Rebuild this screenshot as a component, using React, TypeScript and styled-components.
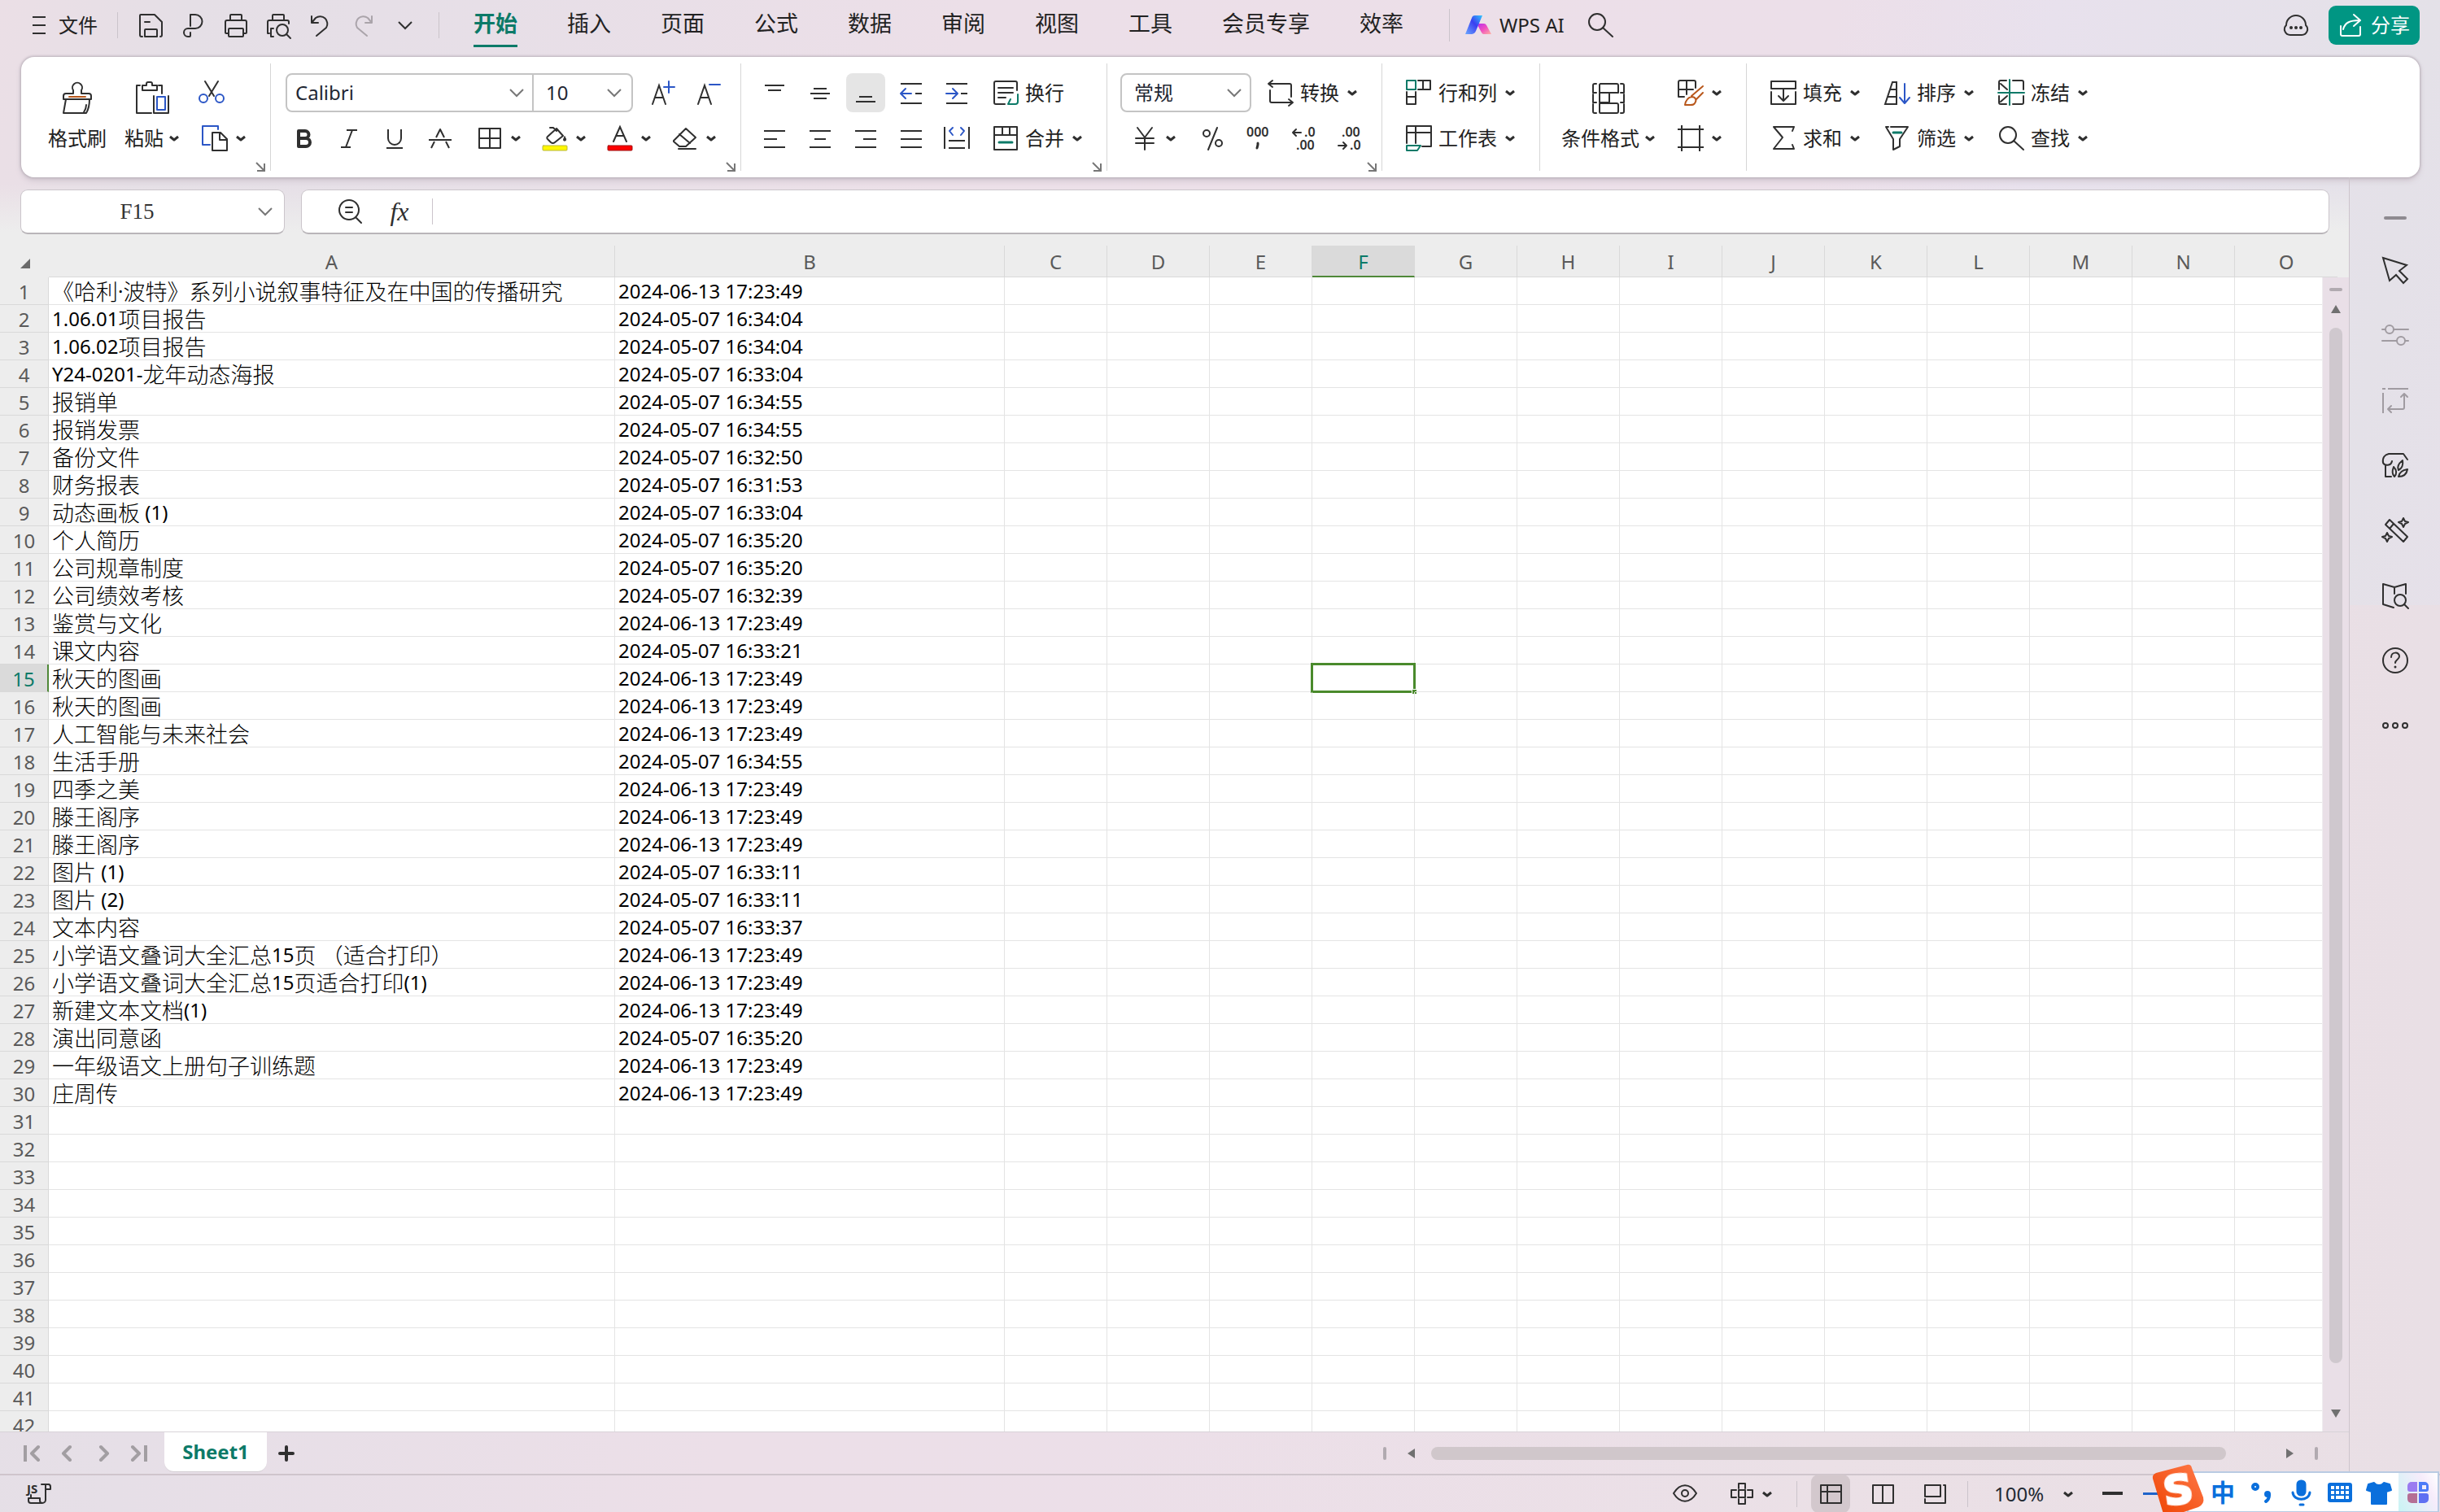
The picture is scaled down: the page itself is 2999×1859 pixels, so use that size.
import React from 'react';
import styled, { createGlobalStyle, css } from 'styled-components';

const INK = '#2f2f2f';
const GREEN = '#0c7a68';
const BLUE = '#2b56c6';
const IME = '#0a6fdc';
const UI = `"Noto Sans", "Noto Sans CJK SC", sans-serif`;

const GlobalStyle = createGlobalStyle`
  *, *::before, *::after { box-sizing: border-box; }
  html, body { margin: 0; padding: 0; }
  body { font-family: ${UI}; font-size: 24px; line-height: 32px; color: #222; overflow: hidden; }
  button, input, select { font: inherit; color: inherit; margin: 0; }
  button { border: 0; padding: 0; background: none; white-space: nowrap; cursor: pointer; }
  svg { display: block; flex: none; overflow: visible; }
`;

/* ---------- drawings ---------- */

type DrawProps = { size?: number; box?: number; color?: string; sw?: number; children: React.ReactNode };
const Draw = ({ size = 32, box = 32, color = INK, sw = 2, children }: DrawProps) => (
  <svg width={size} height={size} viewBox={`0 0 ${box} ${box}`} fill="none" stroke={color} strokeWidth={sw} strokeLinecap="round" strokeLinejoin="round" aria-hidden="true">
    {children}
  </svg>
);

const Caret = () => (
  <svg width="12" height="12" viewBox="0 0 12 12" fill="none" stroke={INK} strokeWidth="3" strokeLinejoin="round" aria-hidden="true">
    <path d="M1 4l5 4 5-4" />
  </svg>
);
const Chevron = ({ color = '#777' }: { color?: string }) => (
  <svg width="18" height="18" viewBox="0 0 18 18" fill="none" stroke={color} strokeWidth="2" aria-hidden="true">
    <path d="M1 5l8 8 8-8" />
  </svg>
);
const DigitText = ({ x, y, children }: { x: number; y: number; children: string }) => (
  <text x={x} y={y} fontFamily="Noto Sans" fontSize="16" fontWeight="600" fill={INK} stroke="none">{children}</text>
);

const icons = {
  menu: <Draw><path strokeLinecap="butt" d="M8 6h16M8 16h16M8 26h16" /></Draw>,
  save: <Draw><path d="M5 30H4a2 2 0 0 1-2-2V4a1 1 0 0 1 1-1h17l9 9v16a2 2 0 0 1-2 2M8 12h6M8 30v-8a1 1 0 0 1 1-1h13a1 1 0 0 1 1 1v8z" /></Draw>,
  exportPdf: <Draw><path d="M12 17V3h6a8 8 0 0 1 0 17H9a5 5 0 0 0 0 10h2a1 1 0 0 0 1-1v-4" /></Draw>,
  print: <Draw><path d="M9 9V4a1 1 0 0 1 1-1h12a1 1 0 0 1 1 1v5M6 26H4a1 1 0 0 1-1-1V12a2 2 0 0 1 2-2h22a2 2 0 0 1 2 2v13a1 1 0 0 1-1 1h-2" /><rect x="7" y="20" width="18" height="10" rx="1" /></Draw>,
  preview: <Draw><path d="M9 9V4a1 1 0 0 1 1-1h12a1 1 0 0 1 1 1v5M5 26H3V12a2 2 0 0 1 2-2h22a2 2 0 0 1 2 2v2M10 30H7V20h3" /><circle cx="21" cy="22" r="7" /><path d="M26 27l5 5" /></Draw>,
  undo: <Draw><path d="M5 5v8h8M5 13l5-6a9 9 0 0 1 13 12L11 29" /></Draw>,
  redo: <Draw color="#aaa4aa"><path d="M27 5v8h-8M27 13l-5-6a9 9 0 0 0-13 12l12 10" /></Draw>,
  search: <Draw><circle cx="12" cy="12" r="10" /><path d="M19 19l12 11" /></Draw>,
  cloud: <Draw><path d="M9 28a7 7 0 0 1-5-12 12 12 0 0 1 24 0 7 7 0 0 1-5 12z" /><path strokeWidth="4" d="M10 19h.01M16 19h.01M22 19h.01" /></Draw>,
  share: <Draw color="#fff"><path d="M3 17v10a2 2 0 0 0 2 2h20a2 2 0 0 0 2-2v-9M6 21C8 13 14 10 26 10M19 3l8 7-8 7" /></Draw>,
  brush: <Draw size={40} box={40}><path d="M15 15V11a6 6 0 1 1 10 0v4h9a3 3 0 0 1 3 3v4H3v-4a3 3 0 0 1 3-3zM6 22L3 39h28c3-5 4-10 4-17M28 38c2-3 3-6 3-9" /><path stroke="#b8571b" d="M10 19h20" /></Draw>,
  paste: <Draw size={40} box={40}><path d="M5 5H1v34h18M28 5h4v10" /><path d="M8 5h5V3a2 2 0 0 1 2-2h3a2 2 0 0 1 2 2v2h6v6H8z" /><path d="M22 18v21h18V18" /><rect x="26" y="19" width="10" height="16" stroke={BLUE} /></Draw>,
  cut: <Draw><path d="M8 2l11 18M24 2L13 20" /><g stroke={BLUE}><circle cx="6" cy="23" r="5" /><circle cx="26" cy="23" r="5" /></g></Draw>,
  copy: <Draw><path stroke={BLUE} d="M10 24H1V1h19v4" /><path d="M13 9h10l8 8v14H13zM22 9v9h9" /></Draw>,
  fontUp: <Draw><path strokeLinejoin="miter" d="M2 30L10 7l8 23M5 22h10" /><path stroke={BLUE} d="M16 9h13M22 2v14" /></Draw>,
  fontDown: <Draw><path strokeLinejoin="miter" d="M2 30L10 7l8 23M5 22h10" /><path stroke={BLUE} d="M16 6h13" /></Draw>,
  bold: <Draw sw={4}><path d="M10 7h8a4 4 0 0 1 0 9h-8zM10 16h9a5 5 0 0 1 0 10h-9z" /></Draw>,
  italic: <Draw><path strokeLinecap="butt" d="M13 6h13M6 27h12M20 6L12 27" /></Draw>,
  underline: <Draw><path strokeLinecap="butt" d="M8 5v11a8 8 0 0 0 16 0V5M6 28h20" /></Draw>,
  strike: <Draw><path strokeLinecap="butt" d="M2 18h28M11 15l5-10 5 10M9 20L5 28M23 20l4 8" /></Draw>,
  borders: <Draw><path d="M3 4h26v24H3zM16 4v24M3 16h26" /></Draw>,
  fill: <Draw><path d="M7 14L18 4l8 9-10 8a4 4 0 0 1-5 0l-4-4a2 2 0 0 1 0-3zM10 3h4l4 4" /><path fill={INK} d="M28 14c2 3 2 4 1 5h-2c-1-1 0-3 1-5z" strokeWidth="1" /><rect x="1" y="25" width="30" height="6" rx="1" fill="#fff700" stroke="#b8b83a" strokeWidth="1" /></Draw>,
  fontColor: <Draw><path strokeLinejoin="miter" d="M8 20L16 2l8 18M11 13h10" /><rect x="1" y="25" width="30" height="6" rx="1" fill="#f00" stroke="#9c1010" strokeWidth="1" /></Draw>,
  eraser: <Draw><path d="M2 19L17 4l12 11-12 11H9l-7-6zM9 11l13 11M8 29h21" /></Draw>,
  alignTop: <Draw><path strokeLinecap="butt" d="M4 7h24M8 13h16" /></Draw>,
  alignMiddle: <Draw><path strokeLinecap="butt" d="M8 11h16M4 17h24M8 23h16" /></Draw>,
  alignBottom: <Draw><path strokeLinecap="butt" d="M8 21h16M4 27h24" /></Draw>,
  outdent: <Draw><path strokeLinecap="butt" d="M3 5h26M3 29h26M21 17h8" /><path stroke={BLUE} d="M4 17h12M9 11l-6 6 6 6" /></Draw>,
  indent: <Draw><path strokeLinecap="butt" d="M3 5h26M3 29h26M21 17h8" /><path stroke={BLUE} d="M3 17h13M11 11l6 6-6 6" /></Draw>,
  alignLeft: <Draw><path strokeLinecap="butt" d="M3 7h26M3 17h16M3 27h26" /></Draw>,
  alignCenter: <Draw><path strokeLinecap="butt" d="M3 7h26M9 17h14M3 27h26" /></Draw>,
  alignRight: <Draw><path strokeLinecap="butt" d="M3 7h26M13 17h16M3 27h26" /></Draw>,
  justify: <Draw><path strokeLinecap="butt" d="M3 7h26M3 17h26M3 27h26" /></Draw>,
  distribute: <Draw><path strokeLinecap="butt" d="M1 2v27M31 2v27M6 19h20M6 28h20" /><path stroke={BLUE} d="M11 3L7 7l4 5M21 3l4 4-4 5" /></Draw>,
  wrap: <Draw><path d="M15 30H4a2 2 0 0 1-2-2V4a2 2 0 0 1 2-2h24a2 2 0 0 1 2 2v9M7 10h18M7 16h18M7 22h9" /><path stroke={GREEN} d="M31 18v9a3 3 0 0 1-3 3h-9l3-6M20 30l4 0" /></Draw>,
  merge: <Draw><path d="M2 2h28v28H2zM2 12h28M12 2v10M21 2v10" /><path stroke={GREEN} strokeWidth="3" d="M8 21h16" /></Draw>,
  convert: <Draw><path d="M6 1L1 5l5 4M1 5h26a2 2 0 0 1 2 2v14M26 32l5-4-5-4M31 28H5a2 2 0 0 1-2-2V13" /></Draw>,
  yuan: <Draw><path d="M7 3l9 12 9-12M16 15v15M5 16h22M5 22h22" /></Draw>,
  percent: <Draw><circle cx="9" cy="10" r="4" /><circle cx="24" cy="22" r="4" /><path d="M22 3L11 30" /></Draw>,
  thousands: <Draw><DigitText x={2} y={14}>000</DigitText><path fill={INK} strokeWidth="3" d="M16 22v2l-1 4" /></Draw>,
  decUp: <Draw><DigitText x={17} y={14}>.0</DigitText><DigitText x={7} y={30}>.00</DigitText><path d="M3 9h10M7 5L3 9l4 4" /></Draw>,
  decDown: <Draw><DigitText x={7} y={14}>.00</DigitText><DigitText x={17} y={30}>.0</DigitText><path d="M3 25h10M9 21l4 4-4 4" /></Draw>,
  rowsCols: <Draw><path stroke={GREEN} d="M1 1h11v11H1z" /><path d="M15 1h15v11H15M21 1v11M1 15v15h11V15M1 21h11" /></Draw>,
  worksheet: <Draw><path d="M1 22V1h30v25H20M1 9h30M12 1v21" /><path stroke={GREEN} d="M1 25h17l-4 6H1z" /></Draw>,
  condFormat: <Draw size={40} box={40}><path d="M10 3h20a2 2 0 0 1 2 2v9H9V4zM9 14v12h12V15M9 27h21a2 2 0 0 1 2 2v8a2 2 0 0 1-2 2H10a1 1 0 0 1-1-1zM5 3H3a2 2 0 0 0-2 2v9h4M1 16v10h4M1 28v9a2 2 0 0 0 2 2h2M35 3h2a2 2 0 0 1 2 2v9h-4M39 16v10h-4M39 28v9a2 2 0 0 1-2 2h-2" /></Draw>,
  tableStyle: <Draw><path d="M8 21H1V3a2 2 0 0 1 2-2h17a2 2 0 0 1 2 2v7M1 12h18M11 1v17" /><path stroke="#b8571b" d="M9 31c1-6 3-9 8-10 5 0 7 4 4 8-1 2-3 2-5 2zM17 20L31 8M23 24l8-8" /></Draw>,
  cellFrame: <Draw><path strokeLinecap="butt" d="M0 5h32M0 27h32M5 0v32M27 0v32" /></Draw>,
  fillDown: <Draw><path d="M1 11V2h30v9zM1 15v15h30V15M16 12v13M10 20l6 6 6-6" /></Draw>,
  sort: <Draw><path strokeLinejoin="miter" d="M1 30L10 3h5v27zM7 12h8M4 21h11" /><path stroke={BLUE} d="M25 5v23M19 22l6 7 6-7" /></Draw>,
  freeze: <Draw><path d="M10 1H3a2 2 0 0 0-2 2v9M18 1h11a2 2 0 0 1 2 2v9M1 20v8a2 2 0 0 0 2 2h7M31 20v8a2 2 0 0 1-2 2H18M3 5l8 7M3 27l8-7" /><path stroke={GREEN} d="M14 0v31M0 16h32" /></Draw>,
  sum: <Draw><path d="M27 7l2-5H4l11 13L4 29h25l-2-5" /></Draw>,
  filter: <Draw><path d="M5 2H2l9 15v13l8-4V17l10-15h-5M8 2h16" /><path stroke={GREEN} strokeWidth="3" d="M11 9h10" /></Draw>,
  zoomOut: <Draw><circle cx="14" cy="14" r="12" /><path d="M23 24l6 6M10 11h8M10 17h8" /></Draw>,
  cursor: <Draw><path d="M1 1l29 9-9 7 10 10-5 5-9-10-8 7z" strokeLinejoin="miter" /></Draw>,
  sliders: <Draw color="#a09ba1"><path d="M0 9h4M14 9h18M0 23h18M28 23h4" /><circle cx="9" cy="9" r="5" /><circle cx="23" cy="23" r="5" /></Draw>,
  transpose: <Draw color="#a09ba1"><path strokeLinecap="butt" d="M0 2h4M7 2h25M1 7v25" /><path d="M11 23l-4 4 4 4M7 27h18a2 2 0 0 0 2-2V9M23 12l4-4 4 4" /></Draw>,
  clothes: <Draw><path d="M11 30H4V17M31 9l-5-7H8C3 3 0 7 1 13c2 4 10 4 11-2" /><path d="M15 30c-3-3-3-7-1-12 4 4 4 9 1 12zM20 22c-2-4 0-8 5-12 1 6-1 10-5 12zM20 30c1-6 5-8 11-9-1 6-5 9-11 9z" /></Draw>,
  wand: <Draw><path d="M4 9l5-6L31 24l-5 6zM9 14l5-6M26 1l2 4 4 1-4 2-2 4-2-4-4-2 4-1zM6 19l2 4 4 1-4 2-2 4-2-4-4-2 4-1z" /></Draw>,
  book: <Draw><path d="M14 31L1 27V2l14 4 14-4v12M15 6v8" /><circle cx="22" cy="22" r="7" /><path d="M27 27l5 5" /></Draw>,
  help: <Draw><circle cx="16" cy="16" r="15" /><path d="M11 12c0-7 10-7 10-1 0 4-5 4-5 8" /><path strokeWidth="3" d="M16 24h.01" /></Draw>,
  more: <Draw><circle cx="4" cy="16" r="3" /><circle cx="16" cy="16" r="3" /><circle cx="28" cy="16" r="3" /></Draw>,
  first: <Draw color="#a29ea2" sw={4}><path strokeLinecap="butt" d="M8 6v20" /><path d="M24 8l-8 8 8 8" /></Draw>,
  prev: <Draw color="#a29ea2" sw={4}><path d="M19 8l-8 8 8 8" /></Draw>,
  next: <Draw color="#a29ea2" sw={4}><path d="M13 8l8 8-8 8" /></Draw>,
  last: <Draw color="#a29ea2" sw={4}><path strokeLinecap="butt" d="M24 6v20" /><path d="M8 8l8 8-8 8" /></Draw>,
  plus: <Draw sw={4}><path d="M16 8v16M8 16h16" /></Draw>,
  macro: <Draw><text x="1" y="15" fontFamily="Noto Sans" fontSize="15" fontWeight="700" fill={INK} stroke="none">JS</text><path d="M19 4h9a3 3 0 0 1 2 3v3h-6M24 5v18a4 4 0 0 1-4 4H6a3 3 0 0 1-3-3v-3h14v3a3 3 0 0 0 3 3M6 21v-4" /></Draw>,
  eye: <Draw><path d="M2 15c8-13 20-13 28 0-8 13-20 13-28 0z" /><circle cx="16" cy="15" r="4" /></Draw>,
  cross: <Draw><path d="M12 9V3h8v6M12 22v6h8v-6M9 11H3v9h6M23 11h6v9h-6M12 11h8v9h-8z" /></Draw>,
  viewNormal: <Draw><path d="M4 5h25v22H4zM4 13h25M12 5v22" /></Draw>,
  viewPage: <Draw><path d="M4 5h25v22H4zM16 5v22" /></Draw>,
  viewBreak: <Draw><path d="M23 5v14H4V5zM4 22v5h25V5h-2" /></Draw>,
  minus: <Draw sw={4}><path strokeLinecap="butt" d="M4 15h25" /></Draw>,
};

const LogoAI = () => (
  <svg width="32" height="24" viewBox="0 0 32 24" aria-hidden="true">
    <defs>
      <linearGradient id="ai1" x1="1" y1="0" x2="0" y2="1"><stop offset="0" stopColor="#31c9ff" /><stop offset=".45" stopColor="#3a3ff0" /><stop offset="1" stopColor="#6aa8ff" /></linearGradient>
      <linearGradient id="ai2" x1="0" y1="0" x2="1" y2="1"><stop offset="0" stopColor="#b52df0" /><stop offset=".5" stopColor="#f04fc0" /><stop offset="1" stopColor="#ffb3a0" /></linearGradient>
    </defs>
    <path d="M14 10h9a4 4 0 0 1 3 2l6 11h-9a3 3 0 0 1-3-2z" fill="url(#ai2)" />
    <path d="M0 23L8 3a4 4 0 0 1 4-3h9L13 19a6 6 0 0 1-5 4z" fill="url(#ai1)" />
  </svg>
);

/* ---------- frame ---------- */

const Window = styled.div`
  display: flex; flex-direction: column; height: 100vh; overflow: hidden;
  background:
    linear-gradient(90deg, #ebdfe600 45%, #ebe0e6 75%, #e9dfe5 100%) bottom / 100% 60% no-repeat,
    linear-gradient(100deg, #ebdfe6 0%, #e5dfe6 7%, #e6dfe7 14%, #ecdfe8 36%, #ecdfe9 68%, #e8e1ed 76%, #e4e1e8 90%, #e8e0eb 100%);
`;
const TopBar = styled.header`
  display: flex; align-items: center; height: 70px; padding: 0 25px 8px 40px;
`;
const FileButton = styled.button`
  display: flex; align-items: center; gap: 8px; margin: 0 24px 0 -8px;
`;
const VRule = styled.i<{ $h?: number }>`
  flex: none; width: 1px; height: ${p => p.$h ?? 32}px; background: #cbc4cb;
`;
const QuickTools = styled.div`
  display: flex; padding: 0 15px;
`;
const QuickButton = styled.button`
  display: grid; place-items: center; width: 52px; height: 40px;
`;
const Tabs = styled.nav`
  display: flex; gap: 61px; margin: 0 56px 0 42px;
`;
const Tab = styled.button<{ $on?: boolean }>`
  height: 54px; padding: 0 0 2px; font-size: 27px; line-height: 40px;
  border-bottom: 3px solid transparent;
  ${p => p.$on && css`color: ${GREEN}; font-weight: 700; border-bottom-color: ${GREEN};`}
`;
const AiButton = styled.button`
  display: flex; align-items: center; gap: 10px; margin: 0 28px 0 19px;
`;
const Spacer = styled.div`flex: 1;`;
const ShareButton = styled.button`
  display: flex; align-items: center; gap: 8px; height: 48px; margin-left: 24px; padding: 0 12px;
  border-radius: 9px; background: #009683; color: #fff;
`;

/* ---------- ribbon ---------- */

const Ribbon = styled.section`
  display: flex; flex: none; height: 148px; margin: 0 25px 0 26px; padding: 8px 0;
  border-radius: 16px; background: #fff; box-shadow: 0 0 3px 1px #b9b0b9, 0 4px 7px #cfc5ce;
`;
const Group = styled.div<{ $w?: number; $pad: number; $gap: number }>`
  position: relative; display: flex; gap: ${p => p.$gap}px;
  flex: ${p => (p.$w ? `0 0 ${p.$w}px` : '1')};
  padding: 12px 0 16px ${p => p.$pad}px;
  border-right: ${p => (p.$w ? '1px solid #d6d6d6' : '0')};
`;
const Stack = styled.div`display: flex; flex-direction: column; gap: 8px;`;
const Row = styled.div<{ $gap?: number; $pad?: number }>`
  display: flex; align-items: center; height: 48px; gap: ${p => p.$gap ?? 8}px; padding-left: ${p => p.$pad ?? 0}px;
`;
const BigButton = styled.button`
  display: flex; flex-direction: column; align-items: center; height: 104px; padding: 10px 6px 0; gap: 14px;
`;
const BigLabel = styled.span`display: flex; align-items: center; gap: 7px;`;
const IconButton = styled.button<{ $on?: boolean }>`
  display: grid; place-items: center; width: 48px; height: 48px; border-radius: 8px;
  background: ${p => (p.$on ? '#e5e5e5' : 'none')};
`;
const DropButton = styled.button`
  display: flex; align-items: center; justify-content: center; gap: 10px; width: 72px; height: 48px;
`;
const TextButton = styled.button`
  display: flex; align-items: center; gap: 8px; height: 48px; padding: 0 8px;
`;
const TextDrop = styled.span`display: flex; align-items: center; gap: 10px;`;
const Launcher = styled.button`
  position: absolute; right: 6px; bottom: -1px;
`;
const ComboBox = styled.div`
  display: flex; height: 48px; border: 2px solid #c4c4c4; border-radius: 8px; background: #fff;
`;
const ComboPart = styled.label<{ $w: number }>`
  display: flex; align-items: center; width: ${p => p.$w}px; padding-right: 10px;
  & + & { border-left: 2px solid #c4c4c4; padding-right: 12px; }
`;
const ComboSelect = styled.select`
  flex: 1; min-width: 0; height: 100%; padding: 0 0 0 15px; border: 0; outline: 0; appearance: none; background: none; color: #1f2733;
`;
const FontSelect = styled(ComboSelect)`padding-left: 10px;`;

/* ---------- work area ---------- */

const Work = styled.div`display: flex; flex: 1; min-height: 0;`;
const Main = styled.main`display: flex; flex-direction: column; flex: 1; min-width: 0;`;
const FormulaBar = styled.div`
  display: flex; gap: 20px; height: 84px; padding: 15px 24px 14px 25px;
  background: linear-gradient(180deg, #ededed00 10%, #ededed 80%);
`;
const field = css`
  display: flex; align-items: center; border: 1px solid #cbc5cb; border-bottom: 2px solid #b9b5b9;
  border-radius: 9px; background: #fff;
`;
const NameBox = styled.label`
  ${field} width: 325px; padding-right: 14px;
`;
const NameInput = styled.input`
  flex: 1; min-width: 0; border: 0; outline: 0; background: none; text-align: center; padding: 0 6px 0 0;
  font-family: "Liberation Serif", serif; font-size: 27px; color: #333;
`;
const FormulaBox = styled.div`
  ${field} flex: 1; padding-left: 44px;
`;
const FxButton = styled.button`
  width: 32px; margin: 0 24px 0 28px; font-family: "Liberation Serif", serif; font-style: italic; font-size: 32px; color: ${INK};
`;
const FormulaInput = styled.input`
  flex: 1; min-width: 0; border: 0; outline: 0; background: none; padding: 0 12px;
`;

const SheetArea = styled.div`
  display: grid; grid-template-columns: minmax(0, 1fr) 33px; grid-template-rows: minmax(0, 1fr);
  flex: 1; min-height: 0; overflow: hidden; background: #ededed;
  border-bottom: 1px solid #d8d3d8;
`;
const SheetClip = styled.div`
  grid-area: 1 / 1 / 2 / 3; min-height: 0; overflow: hidden;
`;
const Grid = styled.table`
  width: 2873px; table-layout: fixed; border-collapse: separate; border-spacing: 0; background: #fff;
`;
const ColHead = styled.th<{ $on?: boolean }>`
  height: 39px; padding: 2px 0 0; font-weight: 400; line-height: 32px; color: ${p => (p.$on ? GREEN : '#5a5a5a')};
  background: ${p => (p.$on ? '#dadada' : '#ededed')};
  border-right: 1px solid #d9d9d9;
  border-bottom: ${p => (p.$on ? '2px solid #4f8838' : '1px solid #d9d9d9')};
  &:last-child { border-right: 0; }
`;
const Corner = styled.th`
  padding: 0 22px 10px 0; background: #ededed; vertical-align: bottom;
  svg { margin-left: auto; }
`;
const RowHead = styled.th<{ $on?: boolean }>`
  height: 34px; padding: 2px 0 0; font-weight: 400; line-height: 31px; color: ${p => (p.$on ? GREEN : '#5a5a5a')};
  background: ${p => (p.$on ? '#dadada' : '#ededed')};
  border-right: ${p => (p.$on ? '2px solid #4f8838' : '1px solid #d9d9d9')};
  border-bottom: 1px solid #d9d9d9;
`;
const Cell = styled.td`
  position: relative; height: 34px; padding: 0 0 0 4px; line-height: 33px; white-space: nowrap; color: #000;
  border-right: 1px solid #e4e4e4; border-bottom: 1px solid #e4e4e4;
`;
const Han = styled.span`
  font-family: "Noto Sans CJK SC", sans-serif; font-size: 27px; font-weight: 300; line-height: 33px; vertical-align: top;
`;
const Selection = styled.i`
  position: absolute; inset: -2px; border: 3px solid #4a8a2c;
  &::after {
    content: ""; position: absolute; right: -5px; bottom: -5px; width: 7px; height: 7px; background: #4a8a2c; border: 1px solid #fff;
  }
`;

const VScroll = styled.div`
  grid-area: 1 / 2; display: flex; flex-direction: column; align-items: center; z-index: 1;
  margin-top: 39px; padding: 13px 0 17px; background: #e9dfe7; border-left: 1px solid #efedef;
`;
const VGrip = styled.i`width: 16px; height: 4px; margin-bottom: 17px; border-radius: 2px; background: #b1aab0;`;
const VTrack = styled.div`flex: 1; width: 16px; margin: 18px 0;`;
const VThumb = styled.div`height: 97%; border-radius: 8px; background: #cfc8ce;`;
const ArrowButton = styled.button`display: grid; place-items: center;`;

const SheetBar = styled.div`
  display: flex; align-items: center; height: 51px; padding-left: 17px;
`;
const NavButton = styled.button`display: grid; place-items: center; width: 44px; height: 40px;`;
const SheetTab = styled.button`
  align-self: flex-start; width: 126px; height: 49px; margin: 0 2px 0 9px; border-radius: 0 0 12px 12px;
  background: #fff; border-bottom: 1px solid #d2ccd2; color: ${GREEN}; font-weight: 700;
`;
const HScroll = styled.div`
  display: flex; align-items: center; flex: 0 1 1187px; margin-left: auto; padding-right: 38px;
`;
const HGrip = styled.i`width: 4px; height: 16px; border-radius: 2px; background: #b1aab0;`;
const HTrack = styled.div`flex: 1; height: 16px; margin: 0 46px 0 20px; padding-right: 28px;`;
const HThumb = styled.div`width: 100%; height: 16px; border-radius: 8px; background: #d0c7cb;`;
const HStart = styled.div`display: flex; align-items: center; gap: 26px;`;

const SideBar = styled.aside`
  display: flex; flex-direction: column; align-items: center; width: 112px; padding-top: 48px;
  border-left: 1px solid #cdc5cc;
`;
const SideGrip = styled.i`width: 28px; height: 4px; margin-bottom: 22px; border-radius: 2px; background: #8e8a90;`;
const SideButton = styled.button`display: grid; place-items: center; width: 80px; height: 80px;`;

/* ---------- status bar ---------- */

const StatusBar = styled.footer`
  display: flex; align-items: center; flex: none; height: 47px; padding-left: 32px; border-top: 2px solid #cfc5cc;
`;
const StatusRight = styled.div`
  display: flex; align-items: center; margin-left: auto; width: 944px; height: 45px;
`;
const ViewSwitch = styled.div`display: flex; margin-left: 17px;`;
const StatusButton = styled.button<{ $on?: boolean }>`
  display: grid; place-items: center; width: 48px; height: 47px; margin-right: 16px; border-radius: 9px;
  background: ${p => (p.$on ? '#d3c8cd' : 'none')};
`;
const StatusDrop = styled.button`display: flex; align-items: center; gap: 9px; margin: 0 30px 0 38px;`;
const ZoomDrop = styled.button`display: flex; align-items: center; gap: 24px; margin: 0 32px; color: #222a33;`;
const ZoomLine = styled.i`flex: none; width: 60px; height: 3px; margin-left: 22px; background: #1f63c9;`;

const ImePanel = styled.div`
  position: fixed; right: 1px; bottom: 0; display: flex; align-items: center; width: 310px; height: 50px; padding-left: 18px;
  background: #fff; border: 2px solid #b9cbe3; border-bottom-width: 1px; z-index: 3; color: ${IME};
`;
const ImeLogo = styled.div`
  position: absolute; left: -48px; top: -12px;
`;
const ImeButton = styled.button`
  display: grid; place-items: center; flex: 1; height: 100%; font-size: 30px; font-weight: 700; color: ${IME};
`;
const ImeMore = styled(ImeButton)`
  background: linear-gradient(60deg, #c9f4f4, #f6ecfb 70%, #fff);
`;

/* ---------- data ---------- */

const TABS = ['开始', '插入', '页面', '公式', '数据', '审阅', '视图', '工具', '会员专享', '效率'];
const COLS = 'ABCDEFGHIJKLMNO'.split('');
const RECORDS: [string, string][] = [
  ['《哈利·波特》系列小说叙事特征及在中国的传播研究', '2024-06-13 17:23:49'],
  ['1.06.01项目报告', '2024-05-07 16:34:04'],
  ['1.06.02项目报告', '2024-05-07 16:34:04'],
  ['Y24-0201-龙年动态海报', '2024-05-07 16:33:04'],
  ['报销单', '2024-05-07 16:34:55'],
  ['报销发票', '2024-05-07 16:34:55'],
  ['备份文件', '2024-05-07 16:32:50'],
  ['财务报表', '2024-05-07 16:31:53'],
  ['动态画板 (1)', '2024-05-07 16:33:04'],
  ['个人简历', '2024-05-07 16:35:20'],
  ['公司规章制度', '2024-05-07 16:35:20'],
  ['公司绩效考核', '2024-05-07 16:32:39'],
  ['鉴赏与文化', '2024-06-13 17:23:49'],
  ['课文内容', '2024-05-07 16:33:21'],
  ['秋天的图画', '2024-06-13 17:23:49'],
  ['秋天的图画', '2024-06-13 17:23:49'],
  ['人工智能与未来社会', '2024-06-13 17:23:49'],
  ['生活手册', '2024-05-07 16:34:55'],
  ['四季之美', '2024-06-13 17:23:49'],
  ['滕王阁序', '2024-06-13 17:23:49'],
  ['滕王阁序', '2024-06-13 17:23:49'],
  ['图片 (1)', '2024-05-07 16:33:11'],
  ['图片 (2)', '2024-05-07 16:33:11'],
  ['文本内容', '2024-05-07 16:33:37'],
  ['小学语文叠词大全汇总15页 （适合打印）', '2024-06-13 17:23:49'],
  ['小学语文叠词大全汇总15页适合打印(1)', '2024-06-13 17:23:49'],
  ['新建文本文档(1)', '2024-06-13 17:23:49'],
  ['演出同意函', '2024-05-07 16:35:20'],
  ['一年级语文上册句子训练题', '2024-06-13 17:23:49'],
  ['庄周传', '2024-06-13 17:23:49'],
];
const ROW_COUNT = 42;
const ACTIVE = { row: 15, col: 'F' };

const CellText = ({ text }: { text: string }) => (
  <>
    {(text.match(/[^\x00-\xff]+|[\x00-\xff]+/g) ?? []).map((run, i) =>
      /[^\x00-\xff]/.test(run) ? <Han key={i}>{run}</Han> : <React.Fragment key={i}>{run}</React.Fragment>)}
  </>
);

/* ---------- parts ---------- */

type IconName = keyof typeof icons;
const Tool = ({ icon, label, on }: { icon: IconName; label: string; on?: boolean }) => (
  <IconButton aria-label={label} $on={on}>{icons[icon]}</IconButton>
);
const Drop = ({ icon, label }: { icon: IconName; label: string }) => (
  <DropButton aria-label={label}>{icons[icon]}<Caret /></DropButton>
);
const Labelled = ({ icon, text, drop }: { icon: IconName; text: string; drop?: boolean }) => (
  <TextButton>{icons[icon]}<TextDrop>{text}{drop && <Caret />}</TextDrop></TextButton>
);
const Big = ({ icon, text, drop }: { icon: IconName; text: string; drop?: boolean }) => (
  <BigButton>{icons[icon]}<BigLabel>{text}{drop && <Caret />}</BigLabel></BigButton>
);
const Launch = () => (
  <Launcher aria-label="更多设置">
    <svg width="12" height="12" viewBox="0 0 12 12" fill="none" stroke="#777" strokeWidth="2"><path d="M1 1l9 9M11 2v9H2" /></svg>
  </Launcher>
);

export default function App() {
  return (
    <Window>
      <GlobalStyle />
      <TopBar>
        <FileButton>{icons.menu}文件</FileButton>
        <VRule />
        <QuickTools>
          <QuickButton aria-label="保存">{icons.save}</QuickButton>
          <QuickButton aria-label="输出为PDF">{icons.exportPdf}</QuickButton>
          <QuickButton aria-label="打印">{icons.print}</QuickButton>
          <QuickButton aria-label="打印预览">{icons.preview}</QuickButton>
          <QuickButton aria-label="撤销">{icons.undo}</QuickButton>
          <QuickButton aria-label="恢复">{icons.redo}</QuickButton>
          <QuickButton aria-label="自定义快速访问"><Chevron color={INK} /></QuickButton>
        </QuickTools>
        <VRule />
        <Tabs>{TABS.map((t, i) => <Tab key={t} $on={i === 0}>{t}</Tab>)}</Tabs>
        <VRule $h={40} />
        <AiButton><LogoAI />WPS AI</AiButton>
        <button aria-label="搜索">{icons.search}</button>
        <Spacer />
        <button aria-label="云同步">{icons.cloud}</button>
        <ShareButton>{icons.share}分享</ShareButton>
      </TopBar>

      <Ribbon>
        <Group $w={307} $pad={27} $gap={10}>
          <Big icon="brush" text="格式刷" />
          <Big icon="paste" text="粘贴" drop />
          <Stack>
            <Row><Tool icon="cut" label="剪切" /></Row>
            <Row $pad={3}><Drop icon="copy" label="复制" /></Row>
          </Stack>
          <Launch />
        </Group>

        <Group $w={578} $pad={16} $gap={0}>
          <Stack>
            <Row $pad={2}>
              <ComboBox>
                <ComboPart $w={301}>
                  <FontSelect defaultValue="Calibri" aria-label="字体"><option>Calibri</option></FontSelect><Chevron />
                </ComboPart>
                <ComboPart $w={122}>
                  <ComboSelect defaultValue="10" aria-label="字号"><option>10</option></ComboSelect><Chevron />
                </ComboPart>
              </ComboBox>
              <Row $pad={6}>
                <Tool icon="fontUp" label="增大字号" />
                <Tool icon="fontDown" label="减小字号" />
              </Row>
            </Row>
            <Row $gap={12}>
              <Row>
                <Tool icon="bold" label="加粗" />
                <Tool icon="italic" label="倾斜" />
                <Tool icon="underline" label="下划线" />
                <Tool icon="strike" label="删除线" />
              </Row>
              <Row>
                <Drop icon="borders" label="边框" />
                <Drop icon="fill" label="填充颜色" />
                <Drop icon="fontColor" label="字体颜色" />
                <Drop icon="eraser" label="清除" />
              </Row>
            </Row>
          </Stack>
          <Launch />
        </Group>

        <Group $w={450} $pad={17} $gap={12}>
          <Stack>
            <Row>
              <Tool icon="alignTop" label="顶端对齐" />
              <Tool icon="alignMiddle" label="垂直居中" />
              <Tool icon="alignBottom" label="底端对齐" on />
              <Tool icon="outdent" label="减少缩进量" />
              <Tool icon="indent" label="增加缩进量" />
            </Row>
            <Row>
              <Tool icon="alignLeft" label="左对齐" />
              <Tool icon="alignCenter" label="水平居中" />
              <Tool icon="alignRight" label="右对齐" />
              <Tool icon="justify" label="两端对齐" />
              <Tool icon="distribute" label="分散对齐" />
            </Row>
          </Stack>
          <Stack>
            <Labelled icon="wrap" text="换行" />
            <Labelled icon="merge" text="合并" drop />
          </Stack>
          <Launch />
        </Group>

        <Group $w={338} $pad={16} $gap={0}>
          <Stack>
            <Row $gap={12}>
              <ComboBox>
                <ComboPart $w={157}>
                  <ComboSelect defaultValue="常规" aria-label="数字格式"><option>常规</option></ComboSelect><Chevron />
                </ComboPart>
              </ComboBox>
              <Labelled icon="convert" text="转换" drop />
            </Row>
            <Row $gap={12} $pad={5}>
              <Drop icon="yuan" label="会计数字格式" />
              <Row>
                <Tool icon="percent" label="百分比样式" />
                <Tool icon="thousands" label="千位分隔样式" />
                <Tool icon="decUp" label="增加小数位数" />
                <Tool icon="decDown" label="减少小数位数" />
              </Row>
            </Row>
          </Stack>
          <Launch />
        </Group>

        <Group $w={194} $pad={21} $gap={0}>
          <Stack>
            <Labelled icon="rowsCols" text="行和列" drop />
            <Labelled icon="worksheet" text="工作表" drop />
          </Stack>
        </Group>

        <Group $w={254} $pad={20} $gap={13}>
          <Big icon="condFormat" text="条件格式" drop />
          <Stack>
            <Drop icon="tableStyle" label="表格样式" />
            <Drop icon="cellFrame" label="单元格样式" />
          </Stack>
        </Group>

        <Group $pad={21} $gap={14}>
          <Stack>
            <Labelled icon="fillDown" text="填充" drop />
            <Labelled icon="sum" text="求和" drop />
          </Stack>
          <Stack>
            <Labelled icon="sort" text="排序" drop />
            <Labelled icon="filter" text="筛选" drop />
          </Stack>
          <Stack>
            <Labelled icon="freeze" text="冻结" drop />
            <Labelled icon="search" text="查找" drop />
          </Stack>
        </Group>
      </Ribbon>

      <Work>
        <Main>
          <FormulaBar>
            <NameBox>
              <NameInput aria-label="名称框" defaultValue="F15" />
              <Chevron />
            </NameBox>
            <FormulaBox>
              <button aria-label="缩小">{icons.zoomOut}</button>
              <FxButton>fx</FxButton>
              <VRule />
              <FormulaInput aria-label="编辑栏" />
            </FormulaBox>
          </FormulaBar>

          <SheetArea>
            <SheetClip>
              <Grid>
                <colgroup>
                  <col width={60} /><col width={696} /><col width={479} />
                  {COLS.slice(2).map(c => <col key={c} width={126} />)}
                </colgroup>
                <thead>
                  <tr>
                    <Corner aria-label="全选"><svg width="13" height="13" viewBox="0 0 13 13"><path d="M12 0v12H0z" fill="#6b6b6b" /></svg></Corner>
                    {COLS.map(c => <ColHead key={c} $on={c === ACTIVE.col}>{c}</ColHead>)}
                  </tr>
                </thead>
                <tbody>
                  {Array.from({ length: ROW_COUNT }, (_, i) => (
                    <tr key={i}>
                      <RowHead $on={i + 1 === ACTIVE.row}>{i + 1}</RowHead>
                      {COLS.map((c, j) => (
                        <Cell key={c}>
                          {j < 2 && RECORDS[i] && <CellText text={RECORDS[i][j]} />}
                          {i + 1 === ACTIVE.row && c === ACTIVE.col && <Selection />}
                        </Cell>
                      ))}
                    </tr>
                  ))}
                </tbody>
              </Grid>
            </SheetClip>
            <VScroll>
              <VGrip />
              <ArrowButton aria-label="向上滚动"><svg width="12" height="10" viewBox="0 0 12 10"><path d="M6 0l6 10H0z" fill="#707070" /></svg></ArrowButton>
              <VTrack><VThumb /></VTrack>
              <ArrowButton aria-label="向下滚动"><svg width="12" height="10" viewBox="0 0 12 10"><path d="M6 10l6-10H0z" fill="#707070" /></svg></ArrowButton>
            </VScroll>
          </SheetArea>

          <SheetBar>
            <NavButton aria-label="第一个工作表">{icons.first}</NavButton>
            <NavButton aria-label="上一个工作表">{icons.prev}</NavButton>
            <NavButton aria-label="下一个工作表">{icons.next}</NavButton>
            <NavButton aria-label="最后一个工作表">{icons.last}</NavButton>
            <SheetTab>Sheet1</SheetTab>
            <NavButton aria-label="新建工作表">{icons.plus}</NavButton>
            <HScroll>
              <HStart>
                <HGrip />
                <ArrowButton aria-label="向左滚动"><svg width="9" height="12" viewBox="0 0 9 12"><path d="M0 6l9-6v12z" fill="#707070" /></svg></ArrowButton>
              </HStart>
              <HTrack><HThumb /></HTrack>
              <HStart>
                <ArrowButton aria-label="向右滚动"><svg width="9" height="12" viewBox="0 0 9 12"><path d="M9 6L0 0v12z" fill="#707070" /></svg></ArrowButton>
                <HGrip />
              </HStart>
            </HScroll>
          </SheetBar>
        </Main>

        <SideBar>
          <SideGrip />
          <SideButton aria-label="选择">{icons.cursor}</SideButton>
          <SideButton aria-label="属性">{icons.sliders}</SideButton>
          <SideButton aria-label="转置">{icons.transpose}</SideButton>
          <SideButton aria-label="皮肤">{icons.clothes}</SideButton>
          <SideButton aria-label="智能工具">{icons.wand}</SideButton>
          <SideButton aria-label="查阅">{icons.book}</SideButton>
          <SideButton aria-label="帮助">{icons.help}</SideButton>
          <SideButton aria-label="更多">{icons.more}</SideButton>
        </SideBar>
      </Work>

      <StatusBar>
        <button aria-label="JS宏">{icons.macro}</button>
        <StatusRight>
          <button aria-label="护眼模式">{icons.eye}</button>
          <StatusDrop aria-label="阅读模式">{icons.cross}<Caret /></StatusDrop>
          <VRule />
          <ViewSwitch>
            <StatusButton $on aria-label="普通视图">{icons.viewNormal}</StatusButton>
            <StatusButton aria-label="页面布局">{icons.viewPage}</StatusButton>
            <StatusButton aria-label="分页预览">{icons.viewBreak}</StatusButton>
          </ViewSwitch>
          <VRule />
          <ZoomDrop>100%<Caret /></ZoomDrop>
          <button aria-label="缩小显示">{icons.minus}</button>
          <ZoomLine />
        </StatusRight>
      </StatusBar>

      <ImePanel>
        <ImeLogo>
          <svg width="72" height="68" viewBox="0 0 72 68" aria-label="搜狗输入法">
            <defs><linearGradient id="sg" x1="1" y1="0" x2="0" y2="1"><stop offset="0" stopColor="#ff7a4a" /><stop offset="1" stopColor="#ee4200" /></linearGradient></defs>
            <path d="M8 12L46 2q5-1 6 4l14 36q2 8-6 12L30 64H20q-3-1-4-5L4 19q-1-5 4-7z" fill="url(#sg)" />
            <text x="35" y="50" transform="rotate(-8 35 32)" textAnchor="middle" fontFamily="DejaVu Sans" fontSize="50" fontWeight="700" fill="#fff" stroke="#fff" strokeWidth="3">S</text>
          </svg>
        </ImeLogo>
        <ImeButton>中</ImeButton>
        <ImeButton aria-label="中文标点"><Draw color={IME} sw={4}><circle cx="8" cy="9" r="3" /><path d="M25 19c0 4-1 6-4 8" /><circle cx="23" cy="18" r="2" /></Draw></ImeButton>
        <ImeButton aria-label="语音"><Draw color={IME} sw={3}><rect x="12" y="2" width="9" height="17" rx="4" fill={IME} /><path d="M6 16c1 11 20 11 21 0M15 31h4" /></Draw></ImeButton>
        <ImeButton aria-label="软键盘"><Draw color={IME}><rect x="2" y="5" width="28" height="22" rx="2" fill={IME} /><path stroke="#fff" strokeWidth="4" strokeLinecap="butt" strokeDasharray="4 2" d="M5 10h22M5 16h22" /><path stroke="#fff" strokeWidth="4" strokeLinecap="butt" d="M5 22h4M11 22h10M23 22h4" /></Draw></ImeButton>
        <ImeButton aria-label="皮肤"><Draw color={IME}><path fill={IME} d="M10 4c3 4 9 4 12 0l7 2 2 7-6 2v15H7V15l-6-2 2-7z" /></Draw></ImeButton>
        <ImeMore aria-label="工具箱">
          <Draw><g stroke="none"><path fill="#9b7bf0" d="M3 8a5 5 0 0 1 5-5h7v12H6a3 3 0 0 1-3-3z" /><path fill="#4d7bf8" fillRule="evenodd" d="M17 3h7a5 5 0 0 1 5 5v4a3 3 0 0 1-3 3h-9zM21 7v5h5V7z" /><path fill="#b56f95" d="M6 17h9v12H8a5 5 0 0 1-5-5v-4a3 3 0 0 1 3-3z" /><path fill="#5f70f2" d="M17 17h9a3 3 0 0 1 3 3v4a5 5 0 0 1-5 5h-7z" /></g></Draw>
        </ImeMore>
      </ImePanel>
    </Window>
  );
}
